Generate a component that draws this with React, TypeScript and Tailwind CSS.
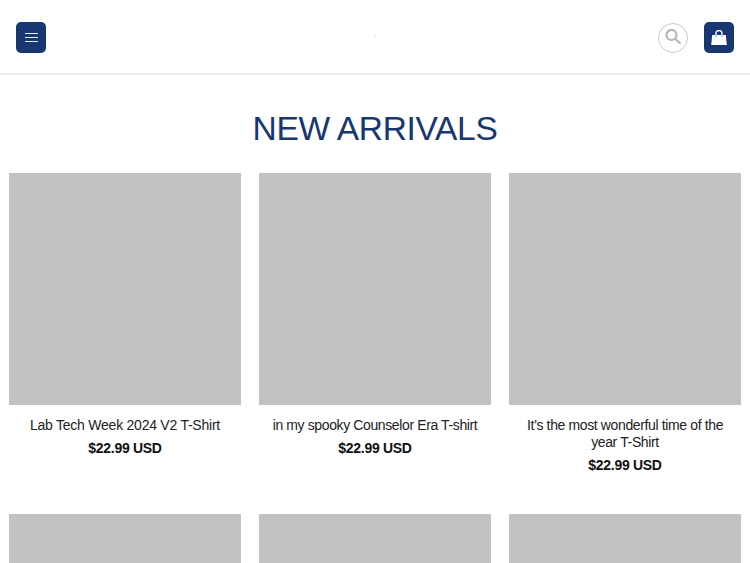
const products = [
  { title: "Lab Tech Week 2024 V2 T-Shirt", tracking: "tracking-[-0.24px]" },
  { title: "in my spooky Counselor Era T-shirt", tracking: "tracking-[-0.38px]" },
  { title: "It’s the most wonderful time of the year T-Shirt", tracking: "tracking-[-0.37px]" },
  { title: "", tracking: "" },
  { title: "", tracking: "" },
  { title: "", tracking: "" },
];

function Card({ title, tracking }: { title: string; tracking: string }) {
  return (
    <div className="flex flex-col items-center text-center">
      <div className="aspect-square w-full bg-[#c2c2c2]" />
      {title && (
        <>
          <p className={`mt-[12px] px-[8px] text-[14px] leading-[17px] text-[#222222] ${tracking}`}>{title}</p>
          <p className="mt-[6px] text-[14px] leading-[17px] font-bold tracking-[-0.3px] text-[#111111]">$22.99 USD</p>
        </>
      )}
    </div>
  );
}

export default function App() {
  return (
    <div className="h-[563px] w-[750px] overflow-hidden bg-white font-['Liberation_Sans',Arial,sans-serif]">
      <header className="relative flex h-[75px] items-center justify-between border-b-2 border-[#eeeeee] px-[16px] pt-[2px]">
        <button className="flex h-[31px] w-[30px] items-center justify-center rounded-[5px] bg-[#183670]">
          <svg width="13" height="10" viewBox="0 0 13 10" fill="none" stroke="#e6eaf2" strokeWidth="1">
            <path d="M0 .5h13M0 4.5h13M0 8.5h13" />
          </svg>
        </button>
        <div className="absolute top-[36px] left-[375px] h-[1px] w-[1px] bg-[#cccccc]" />
        <div className="flex items-center gap-[16px]">
          <button className="flex h-[30px] w-[30px] items-center justify-center rounded-full border border-[#c8c8c8]">
            <svg width="16" height="15" viewBox="0 0 16 15" fill="none" stroke="#b5b5b5" strokeWidth="2.2" className="relative -top-[1.5px]">
              <circle cx="6.5" cy="6" r="5" />
              <path d="M10.2 9.8l4.6 4.2" strokeLinecap="round" />
            </svg>
          </button>
          <button className="flex h-[31px] w-[30px] items-center justify-center rounded-[5px] bg-[#183670]">
            <svg width="16" height="15" viewBox="0 0 16 15" className="relative -top-[0.5px]">
              <path d="M5 5.5V3a3 2.4 0 0 1 6 0V5.5" fill="none" stroke="#ffffff" strokeWidth="1.4" />
              <path d="M1.2 5h13.6L15.8 15H0.2z" fill="#ffffff" />
              <path d="M5 5.4v1.4M11 5.4v1.4" stroke="#183670" strokeWidth="0.7" />
            </svg>
          </button>
        </div>
      </header>
      <h2 className="mt-[34px] text-center text-[33.5px] leading-[40px] font-normal tracking-[-0.33px] text-[#183670]">NEW ARRIVALS</h2>
      <div className="mt-[24px] grid grid-cols-3 items-start gap-x-[18px] gap-y-[40px] px-[9px]">
        {products.map((p, i) => (
          <Card key={i} title={p.title} tracking={p.tracking} />
        ))}
      </div>
    </div>
  );
}
